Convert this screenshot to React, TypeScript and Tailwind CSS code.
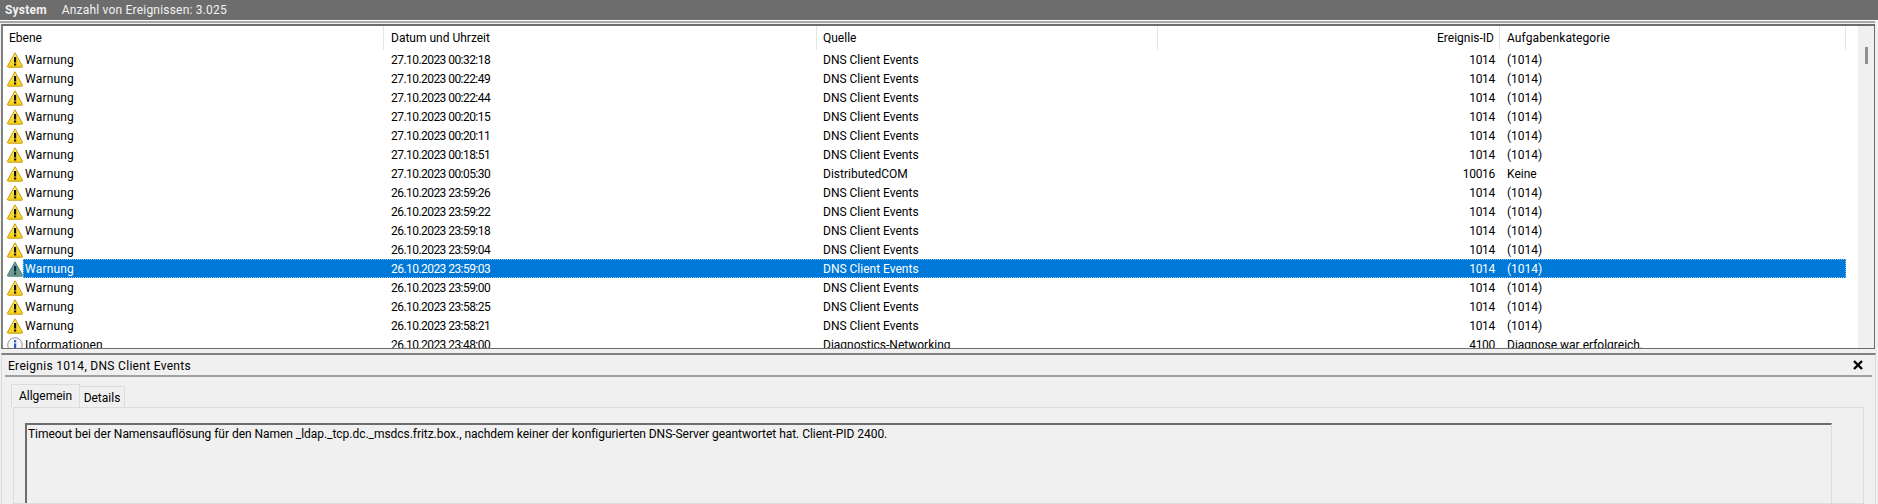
const ROWS = [
  { level: "Warnung", date: "27.10.2023 00:32:18", source: "DNS Client Events", id: "1014", cat: "(1014)" },
  { level: "Warnung", date: "27.10.2023 00:22:49", source: "DNS Client Events", id: "1014", cat: "(1014)" },
  { level: "Warnung", date: "27.10.2023 00:22:44", source: "DNS Client Events", id: "1014", cat: "(1014)" },
  { level: "Warnung", date: "27.10.2023 00:20:15", source: "DNS Client Events", id: "1014", cat: "(1014)" },
  { level: "Warnung", date: "27.10.2023 00:20:11", source: "DNS Client Events", id: "1014", cat: "(1014)" },
  { level: "Warnung", date: "27.10.2023 00:18:51", source: "DNS Client Events", id: "1014", cat: "(1014)" },
  { level: "Warnung", date: "27.10.2023 00:05:30", source: "DistributedCOM", id: "10016", cat: "Keine" },
  { level: "Warnung", date: "26.10.2023 23:59:26", source: "DNS Client Events", id: "1014", cat: "(1014)" },
  { level: "Warnung", date: "26.10.2023 23:59:22", source: "DNS Client Events", id: "1014", cat: "(1014)" },
  { level: "Warnung", date: "26.10.2023 23:59:18", source: "DNS Client Events", id: "1014", cat: "(1014)" },
  { level: "Warnung", date: "26.10.2023 23:59:04", source: "DNS Client Events", id: "1014", cat: "(1014)" },
  { level: "Warnung", date: "26.10.2023 23:59:03", source: "DNS Client Events", id: "1014", cat: "(1014)", selected: true },
  { level: "Warnung", date: "26.10.2023 23:59:00", source: "DNS Client Events", id: "1014", cat: "(1014)" },
  { level: "Warnung", date: "26.10.2023 23:58:25", source: "DNS Client Events", id: "1014", cat: "(1014)" },
  { level: "Warnung", date: "26.10.2023 23:58:21", source: "DNS Client Events", id: "1014", cat: "(1014)" },
  { level: "Informationen", date: "26.10.2023 23:48:00", source: "Diagnostics-Networking", id: "4100", cat: "Diagnose war erfolgreich." },
];

function WarnIcon({ selected }: { selected?: boolean }) {
  const edge = selected ? "#4f7f78" : "#c29a1a";
  const mark = selected ? "#04264a" : "#111111";
  return (
    <svg width="16" height="16" viewBox="0 0 16 16" className="shrink-0">
      <defs>
        <linearGradient id="warn" x1="0" y1="0" x2="0" y2="1">
          <stop offset="0" stopColor="#fff06a" />
          <stop offset="1" stopColor="#f8cf12" />
        </linearGradient>
      </defs>
      <path
        d="M8 0.8 L15.5 14.2 Q15.8 15.2 14.8 15.2 H1.2 Q0.2 15.2 0.5 14.2 Z"
        fill={selected ? "#6f9c8c" : "url(#warn)"}
        stroke={edge}
        strokeWidth="1"
        strokeLinejoin="round"
      />
      <rect x="7" y="5" width="2.2" height="5.5" fill={mark} />
      <rect x="7" y="11.5" width="2.2" height="2" fill={mark} />
    </svg>
  );
}

function InfoIcon() {
  return (
    <svg width="16" height="16" viewBox="0 0 16 16" className="shrink-0">
      <circle cx="8" cy="8" r="7.3" fill="#f4f6fa" stroke="#8d97a8" strokeWidth="1" />
      <rect x="7" y="3.2" width="2.2" height="2.2" fill="#2a56b8" />
      <rect x="7" y="6.5" width="2.2" height="6" fill="#2a56b8" />
    </svg>
  );
}

function Row({ row }: { row: (typeof ROWS)[number] }) {
  const sel = row.selected;
  return (
    <div className="flex h-[19px] shrink-0 items-center leading-[19px]">
      <div className="w-[20px] shrink-0 pl-[4px]">
        {row.level === "Warnung" ? <WarnIcon selected={sel} /> : <InfoIcon />}
      </div>
      <div
        className={`flex h-[19px] w-[1823px] shrink-0 items-center border border-dotted pt-[2px] ${
          sel ? "border-[#8cc4f0] bg-[#0078d7] text-white" : "border-transparent"
        }`}
      >
        <div className="w-[360px] shrink-0 pl-[1px] tracking-[0.2px]">{row.level}</div>
        <div className="w-[433px] shrink-0 pl-[7px] tracking-[-0.55px]">{row.date}</div>
        <div className="w-[341px] shrink-0 pl-[6px]">{row.source}</div>
        <div className="w-[342px] shrink-0 pr-[5px] text-right tracking-[-0.3px]">{row.id}</div>
        <div className="pl-[7px]">{row.cat}</div>
      </div>
    </div>
  );
}

export default function App() {
  return (
    <div className="flex h-[504px] w-[1878px] flex-col overflow-hidden bg-[#f0f0f0] font-['Roboto','Noto_Sans',sans-serif] text-[12px] text-[#000000]">
      {/* title bar */}
      <div className="flex h-[20px] shrink-0 items-center bg-[#6d6d6d] pl-[5px] text-[#f2f2f2]">
        <span className="font-bold tracking-[0.2px]">System</span>
        <span className="ml-[15px] tracking-[0.2px]">Anzahl von Ereignissen: 3.025</span>
      </div>
      <div className="h-[1px] shrink-0 bg-white" />
      <div className="mr-[3px] h-[2px] shrink-0 bg-[#a8a8a8]" />

      {/* event list */}
      <div className="ml-[1px] mr-[3px] mt-[1px] flex h-[325px] shrink-0 overflow-hidden border-x border-b border-t-2 border-[#6d6d6d] border-l-2 border-l-[#808080] bg-white">
        <div className="w-[1855px] shrink-0">
          <div className="flex h-[24px] items-center">
            <div className="flex h-full w-[381px] items-center border-r border-[#e5e5e5] pl-[6px]">Ebene</div>
            <div className="flex h-full w-[433px] items-center border-r border-[#e5e5e5] pl-[7px]">Datum und Uhrzeit</div>
            <div className="flex h-full w-[341px] items-center border-r border-[#e5e5e5] pl-[6px]">Quelle</div>
            <div className="flex h-full w-[342px] items-center justify-end border-r border-[#e5e5e5] pr-[5px]">Ereignis-ID</div>
            <div className="flex h-full w-[346px] items-center border-r border-[#e5e5e5] pl-[7px] tracking-[0.1px]">Aufgabenkategorie</div>
          </div>
          {ROWS.map((row) => (
            <Row key={row.date} row={row} />
          ))}
        </div>
        <div className="flex-1 bg-[#f0f0f0] pl-[7px] pt-[21px]">
          <div className="h-[17px] w-[3px] bg-[#8f8f8f]" />
        </div>
      </div>

      {/* detail pane */}
      <div className="ml-[1px] mr-[2px] mt-[4px] flex min-h-0 flex-1 flex-col border-l border-r border-t-2 border-[#dcdcdc] border-t-[#808080]">
        <div className="ml-[3px] mr-[3px] flex h-[22px] shrink-0 items-center justify-between border-b-2 border-[#a0a0a0] pr-[9px]">
          <span className="pl-[3px] pt-[2px] tracking-[0.3px]">Ereignis 1014, DNS Client Events</span>
          <svg width="10" height="10" viewBox="0 0 10 10">
            <path d="M1 1 L9 9 M9 1 L1 9" stroke="#000" strokeWidth="2.4" />
          </svg>
        </div>
        <div className="flex h-[30px] shrink-0 items-end pl-[9px]">
          <div className="flex h-[23px] w-[69px] items-center justify-center border border-b-0 border-[#dcdcdc]">Allgemein</div>
          <div className="flex h-[21px] w-[45px] items-center justify-center border border-b-0 border-l-0 border-[#dcdcdc] pt-[2px]">Details</div>
        </div>
        <div className="ml-[11px] mr-[11px] flex-1 border border-[#dcdcdc] pl-[11px] pr-[31px] pt-[15px]">
          <div className="h-full border-l-2 border-t-2 border-r border-[#6d6d6d] border-r-[#dcdcdc] pl-[1px] leading-[19px] tracking-[-0.04px]">
            Timeout bei der Namensauflösung für den Namen _ldap._tcp.dc._msdcs.fritz.box., nachdem keiner der konfigurierten DNS-Server geantwortet hat. Client-PID 2400.
          </div>
        </div>
      </div>
    </div>
  );
}
